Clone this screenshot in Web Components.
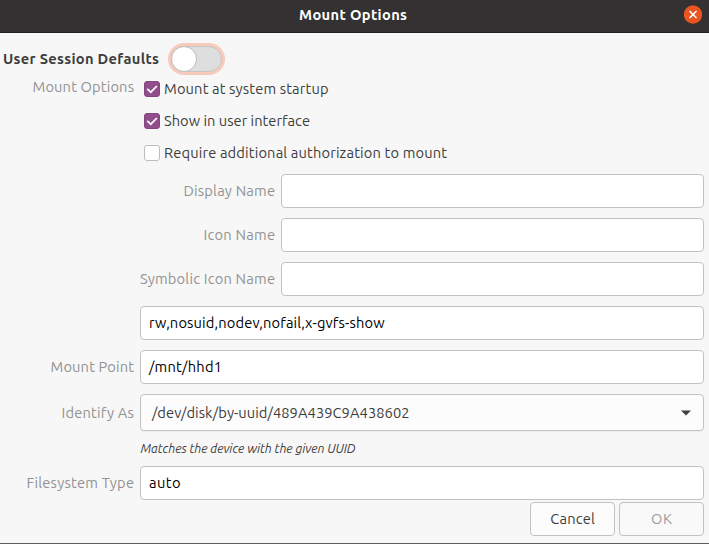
<!DOCTYPE html>
<html lang="en">
<head>
<meta charset="utf-8">
<title>Mount Options</title>
<style>
html,body{margin:0;height:544px;overflow:hidden;background:#f7f7f7}
body{font:14.667px/20px Ubuntu,"Noto Sans",sans-serif;color:#3d3d3d}
</style>
</head>
<body>
<mount-dialog></mount-dialog>
<script>
const define = (name, html, setup) => customElements.define(name, class extends HTMLElement {
  connectedCallback() {
    if (this.shadowRoot) return;
    this.attachShadow({ mode: 'open' }).innerHTML = html;
    if (setup) setup(this, this.shadowRoot);
  }
});

// Text whose tracking is adjusted to the advance width in its "w" attribute.
define('ui-text', `<style>:host{display:inline-block;white-space:pre;flex:none}span{display:inline-block}</style><span><slot></slot></span>`, (el, root) => {
  const s = root.querySelector('span'), w = +el.getAttribute('w'), n = el.textContent.length;
  const ls = (w - s.getBoundingClientRect().width) / (n - 1);
  s.style.letterSpacing = ls + 'px';
  s.style.marginRight = -ls + 'px';
});

define('title-bar', `<style>
:host{display:grid;grid-template-columns:1fr auto 1fr;height:32px;align-items:center;background:#333132;border-bottom:1px solid #201f1f;color:#fff;font-weight:700}
ui-text{padding:0 3px 2px 0;grid-column:2}
svg{display:block;justify-self:end;margin:0 7px 4px 0}
</style><ui-text w="108">Mount Options</ui-text>
<svg width="18" height="19" viewBox="0 0 18 19"><circle cx="9" cy="9.5" r="9.2" fill="#e95420"/><path d="M5.5 6l7 7M12.5 6l-7 7" stroke="#fff" stroke-width="1.6"/></svg>`);

define('toggle-switch', `<style>
:host{display:block;box-sizing:border-box;width:51px;height:26px;border:1px solid #c4c4c4;border-radius:13px;background:#dedede;box-shadow:0 0 0 3px #f7cabc}
i{display:block;box-sizing:border-box;width:26px;height:26px;margin:-1px;border:1px solid #bdbdbd;border-radius:50%;background:#fff}
</style><i></i>`);

define('check-box', `<style>
:host{display:flex;height:32px;align-items:center;gap:4px;padding-left:4px}
i{box-sizing:border-box;width:16px;height:16px;border:1px solid #bdbdbd;border-radius:3px;background:#fff}
:host([checked]) i{background:#924d8b;border-color:#84457e}
svg{display:none}:host([checked]) svg{display:block}
</style><i><svg width="14" height="14" viewBox="0 0 14 14"><path d="M2.3 6.8l3.5 3.4L11.9 4" fill="none" stroke="#fff" stroke-width="1.7"/></svg></i><slot></slot>`);

define('text-entry', `<style>
:host{display:flex;box-sizing:border-box;flex:1;height:34px;border:1px solid #c2c2c2;border-radius:4px;background:#fff;align-items:center;padding:0 8px;color:#000}
</style><slot></slot>`);

define('combo-box', `<style>
:host{display:flex;box-sizing:border-box;flex:1;height:37px;border:1px solid #c2c2c2;border-radius:4px;background:#fcfcfc;box-shadow:0 1px 1px #0000000a;align-items:center;justify-content:space-between;padding:0 12px 0 11px}
</style><slot></slot><svg width="10" height="6" viewBox="0 0 10 6"><path d="M0 .5h10L5 5.5z" fill="#3d3d3d"/></svg>`);

define('push-button', `<style>
:host{display:flex;box-sizing:border-box;width:85px;height:34px;border:1px solid #c2c2c2;border-radius:4px;background:#fcfcfc;align-items:center;justify-content:center}
:host([disabled]){background:#f9f9f9;color:#9c9c9c}
</style><slot></slot>`);

define('form-row', `<style>
:host{display:flex;align-items:center;padding-right:5px}
.l{display:flex;justify-content:flex-end;box-sizing:border-box;width:140px;padding-right:6px;color:#929292}
:host([inner]) .l{width:281px}
:host([top]){align-items:flex-start}:host([top]) .l{padding-top:4px}
</style><div class="l"><slot name="label"></slot></div><slot></slot>`);

define('mount-dialog', `<style>
:host{display:flex;flex-direction:column;box-sizing:border-box;height:544px;border-bottom:1px solid #5e5e5e}
.switch{display:flex;height:40px;align-items:flex-start;padding:13px 0 0 3px;box-sizing:border-box;gap:12px;font-weight:700}
.switch ui-text{padding-top:3px}
.fields{display:flex;flex-direction:column;gap:10px;padding-top:5px}
.note{font-style:italic;font-size:12.5px;height:35px;line-height:34px;padding-left:140.5px}
.buttons{display:flex;justify-content:flex-end;gap:4px;padding:2px 5px 0}
</style>
<title-bar></title-bar>
<div class="switch"><ui-text w="156">User Session Defaults</ui-text><toggle-switch></toggle-switch></div>
<form-row top><ui-text slot="label" w="101.5">Mount Options</ui-text><div>
<check-box checked><ui-text w="164.5">Mount at system startup</ui-text></check-box>
<check-box checked><ui-text w="146">Show in user interface</ui-text></check-box>
<check-box><ui-text w="283">Require additional authorization to mount</ui-text></check-box></div></form-row>
<div class="fields">
<form-row inner><ui-text slot="label" w="91.5">Display Name</ui-text><text-entry></text-entry></form-row>
<form-row inner><ui-text slot="label" w="71.5">Icon Name</ui-text><text-entry></text-entry></form-row>
<form-row inner><ui-text slot="label" w="135">Symbolic Icon Name</ui-text><text-entry></text-entry></form-row>
<form-row><text-entry><ui-text w="235.5">rw,nosuid,nodev,nofail,x-gvfs-show</ui-text></text-entry></form-row>
<form-row><ui-text slot="label" w="83.5">Mount Point</ui-text><text-entry><ui-text w="73">/mnt/hhd1</ui-text></text-entry></form-row>
<form-row><ui-text slot="label" w="72.5">Identify As</ui-text><combo-box><ui-text w="257.5">/dev/disk/by-uuid/489A439C9A438602</ui-text></combo-box></form-row>
</div>
<div class="note"><ui-text w="215">Matches the device with the given UUID</ui-text></div>
<form-row><ui-text slot="label" w="107.5">Filesystem Type</ui-text><text-entry><ui-text w="31.5">auto</ui-text></text-entry></form-row>
<div class="buttons"><push-button><ui-text w="44.5">Cancel</ui-text></push-button><push-button disabled><ui-text w="21">OK</ui-text></push-button></div>`);
</script>
</body>
</html>
